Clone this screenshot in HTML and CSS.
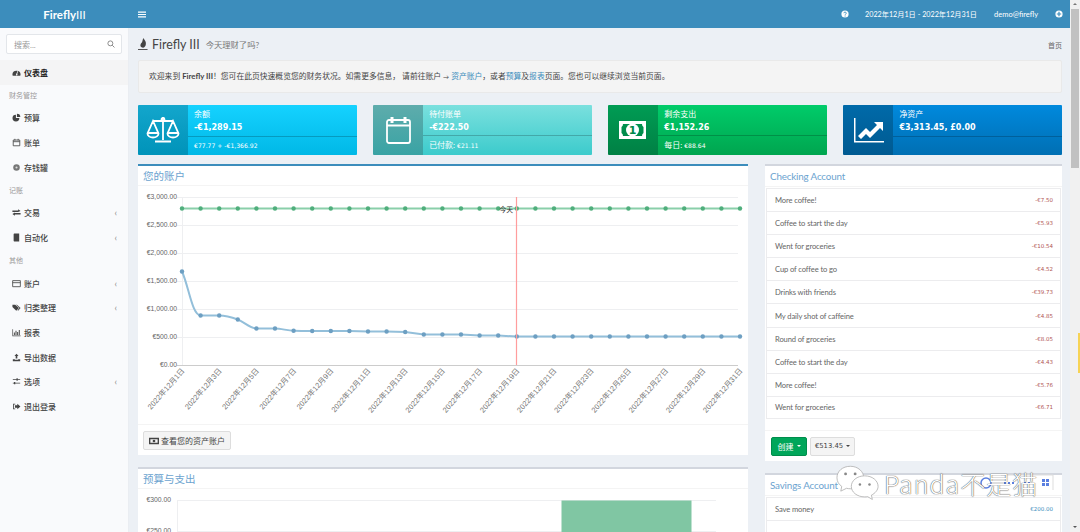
FILE: index.html
```html
<!DOCTYPE html>
<html lang="zh">
<head>
<meta charset="utf-8">
<title>Firefly III</title>
<link rel="stylesheet" href="styles.css">
</head>
<body>
<div class="page">
  <div class="app">
    <header class="topbar">
      <div class="brand"><b>Firefly</b><span>III</span></div>
      <svg class="burger" viewBox="0 0 8 7"><path d="M0 .5h8v1.2H0zM0 2.900h8v1.200H0zM0 5.300h8v1.200H0z"/></svg>
      <div class="topnav">
        <svg class="topic" viewBox="0 0 8 8"><circle cx="4" cy="4" r="3.600" fill="#fff"/><path d="M2.800 3.200c0-1.500 2.500-1.500 2.500 0 0 .9-1.200.8-1.200 1.600" fill="none" stroke="#3c8dbc" stroke-width=".9"/><path d="M3.600 5.400h1v1h-1z" fill="#3c8dbc"/></svg>
        <span class="range">2022年12月1日 - 2022年12月31日</span>
        <span class="user">demo@firefly</span>
        <svg class="topic" viewBox="0 0 8 8"><circle cx="4" cy="4" r="3.600" fill="#fff"/><path d="M3.400 1.800h1.200v1.600h1.600v1.200H4.600v1.600H3.400V4.600H1.800V3.400h1.600z" fill="#3c8dbc"/></svg>
      </div>
    </header>
    <div class="body">
      <aside class="sidebar">
        <div class="search"><span>搜索...</span>
          <svg class="searchic" viewBox="0 0 10 10"><circle cx="4.200" cy="4.200" r="3.100"/><path d="M6.500 6.500 9.300 9.300"/></svg>
        </div>
        <nav class="menu">
          <a class="item active"><svg class="ic" viewBox="0 0 11 11"><path fill-rule="evenodd" d="M.5 8.500a5 5 0 1 1 10 0c0 .6-.3.9-.8.9H1.300c-.5 0-.8-.3-.8-.9zM5 7.500a1 1 0 1 0 1.400-.2L7.500 4 6.800 3.800 5.500 6.700A1 1 0 0 0 5 7.500z"/></svg><b>仪表盘</b></a>
          <div class="label">财务管控</div>
          <a class="item"><svg class="ic" viewBox="0 0 11 11"><path d="M4.800 2a4.200 4.200 0 1 0 4.200 4.200H4.800z"/><path d="M6 .8a4.200 4.200 0 0 1 4.200 4.200H6z"/></svg><b>预算</b></a>
          <a class="item"><svg class="ic line" viewBox="0 0 11 11"><path d="M1.500 2.500h8v7h-8zM1.500 4.500h8M3.500 1v2M7.500 1v2"/></svg><b>账单</b></a>
          <a class="item"><svg class="ic" viewBox="0 0 11 11"><circle cx="5.500" cy="5.500" r="4" fill="#777"/><circle cx="5.500" cy="5.500" r="1.300" fill="#ddd"/></svg><b>存钱罐</b></a>
          <div class="label">记账</div>
          <a class="item more"><svg class="ic" viewBox="0 0 11 11"><path d="M.5 3h7V1.500L10.500 3.700 7.500 5H.5zM10.500 6h-7V5.500L.5 7.300 3.500 9.500V8h7z"/></svg><b>交易</b><i>‹</i></a>
          <a class="item more"><svg class="ic" viewBox="0 0 11 11"><path d="M2 1.500c0-.5.400-.8.800-.8h6v9.600h-6c-.4 0-.8-.3-.8-.8z"/></svg><b>自动化</b><i>‹</i></a>
          <div class="label">其他</div>
          <a class="item more"><svg class="ic line" viewBox="0 0 11 11"><path d="M.8 2h9.400v7.400H.8zM.8 4.500h9.400" stroke-width="1"/></svg><b>账户</b><i>‹</i></a>
          <a class="item more"><svg class="ic" viewBox="0 0 11 11"><path d="M.5 2h3.500l4.500 4.200L5.200 9.500.5 5z"/><path d="M5 2h1l4.500 4.200-3 3.300-.7-.6 2.300-2.700z"/></svg><b>归类整理</b><i>‹</i></a>
          <a class="item"><svg class="ic" viewBox="0 0 11 11"><path d="M.5 1.500h.8v7.700h9.200v.8H.5zM2.300 5.500h1.200v3H2.300zM4.300 3.500h1.200v5H4.300zM6.300 5h1.200v3.500H6.300zM8.300 2.500h1.200v6H8.300z"/></svg><b>报表</b></a>
          <a class="item"><svg class="ic" viewBox="0 0 11 11"><path d="M5.500 1 8 3.800H6.500v3h-2v-3H3zM1 7.500h2.500v.8h4v-.8H10v2.500H1z"/></svg><b>导出数据</b></a>
          <a class="item more"><svg class="ic" viewBox="0 0 11 11"><path d="M1 2.500h4.500V1.500h1.500v1h3v1H7v1H5.500v-1H1zM1 7h1.500V6H4v1h6v1H4v1H2.500V8H1z"/></svg><b>选项</b><i>‹</i></a>
          <a class="item"><svg class="ic" viewBox="0 0 11 11"><path d="M4 2H1.300v7H4v-1H2.300V3H4z"/><path d="M6.500 2 10.300 5.500 6.500 9V7H3.600V4h2.900z"/></svg><b>退出登录</b></a>
        </nav>
      </aside>
      <main class="content">
        <div class="heading">
          <svg class="flame" viewBox="0 0 11 14"><path d="M6 .5C7 3 9.500 4.500 8.500 8c-.4 1.500-1.500 2.700-3 3C3 11 2 9 3 7c.5-1 1.700-1.500 1.800-3C5 2.500 5.500 1.500 6 .5z"/><path d="M0 12.500h10.500v1H0z"/></svg>
          <h1>Firefly III</h1><small>今天理财了吗?</small>
          <span class="crumb">首页</span>
        </div>
        <div class="welcome">欢迎来到 <b>Firefly III</b>！您可在此页快速概览您的财务状况。如需更多信息， 请前往账户 <span class="tiny">→</span> <a>资产账户</a>，或者<a>预算</a>及<a>报表</a>页面。您也可以继续浏览当前页面。</div>
        <div class="boxes">
          <div class="box c1">
            <div class="boxic"><svg viewBox="0 0 34 34"><path d="M17 4v23M9 28.500h16M7 8h20" /><circle cx="17" cy="6.500" r="1.500"/><path d="M7 8 1.500 20.500a5.500 4 0 0 0 11 0zM27 8l-5.500 12.500a5.500 4 0 0 0 11 0zM1.500 20h11M21.500 20h11"/></svg></div>
            <div class="boxbody"><div class="boxtop"><span>余额</span><strong>-€1,289.15</strong></div><div class="boxfoot">€77.77 + -€1,366.92</div></div>
          </div>
          <div class="box c2">
            <div class="boxic"><svg viewBox="0 0 34 34"><path d="M8 7h19a2 2 0 0 1 2 2v19a2 2 0 0 1-2 2H8a2 2 0 0 1-2-2V9a2 2 0 0 1 2-2zM6 12.500h23"/><path d="M11 4v6M24 4v6" stroke-width="3"/></svg></div>
            <div class="boxbody"><div class="boxtop"><span>待付账单</span><strong>-€222.50</strong></div><div class="boxfoot"><span class="cjk">已付款:</span> €21.11</div></div>
          </div>
          <div class="box c3">
            <div class="boxic"><svg viewBox="0 0 34 34" class="solid"><path fill-rule="evenodd" d="M3 8h27v18H3zM7 11a3.500 3.500 0 0 1-1.500 3v6a3.500 3.500 0 0 1 1.500 3h19a3.500 3.500 0 0 1 1.500-3v-6a3.500 3.500 0 0 1-1.500-3z"/><circle cx="16.500" cy="17" r="6.500"/><text x="16.500" y="21" text-anchor="middle" class="billnum">1</text></svg></div>
            <div class="boxbody"><div class="boxtop"><span>剩余支出</span><strong>€1,152.26</strong></div><div class="boxfoot"><span class="cjk">每日:</span> €88.64</div></div>
          </div>
          <div class="box c4">
            <div class="boxic"><svg viewBox="0 0 34 34" class="solid"><path d="M3 5h1.500v23H33v1.500H3z"/><path d="M7 23l8-8 4 4 7-7-3-3h9v9l-3-3-10 10-4-4-5 5z"/></svg></div>
            <div class="boxbody"><div class="boxtop"><span>净资产</span><strong>€3,313.45, £0.00</strong></div><div class="boxfoot"></div></div>
          </div>
        </div>
        <div class="columns">
          <div class="col">
            <section class="card primary">
              <h3 class="cardhead">您的账户</h3>
              <svg class="chart" viewBox="138 186 610 238">
                <defs>
                  <marker id="dg" markerWidth="6" markerHeight="6" refX="3" refY="3" markerUnits="userSpaceOnUse"><circle cx="3" cy="3" r="2.200" fill="#4fae7c"/></marker>
                  <marker id="db" markerWidth="6" markerHeight="6" refX="3" refY="3" markerUnits="userSpaceOnUse"><circle cx="3" cy="3" r="2.200" fill="#6d9fc2"/></marker>
                </defs>
                <path class="grid" d="M177 197.500H738M177 225.500H738M177 253.500H738M177 281.500H738M177 309.500H738M177 337.500H738M182.500 197V365"/>
                <path class="axis" d="M177 365.500H738"/>
                <g class="ylabels">
                  <text x="177" y="198.500">€3,000.00</text>
                  <text x="177" y="226.500">€2,500.00</text>
                  <text x="177" y="254.500">€2,000.00</text>
                  <text x="177" y="282.500">€1,500.00</text>
                  <text x="177" y="310.500">€1,000.00</text>
                  <text x="177" y="338.500">€500.00</text>
                  <text x="177" y="366.500">€0.00</text>
                </g>
                <g class="xlabels">
                  <text transform="translate(185 371) rotate(-49)">2022年12月1日</text>
                  <text transform="translate(222.200 371) rotate(-49)">2022年12月3日</text>
                  <text transform="translate(259.400 371) rotate(-49)">2022年12月5日</text>
                  <text transform="translate(296.600 371) rotate(-49)">2022年12月7日</text>
                  <text transform="translate(333.800 371) rotate(-49)">2022年12月9日</text>
                  <text transform="translate(371 371) rotate(-49)">2022年12月11日</text>
                  <text transform="translate(408.200 371) rotate(-49)">2022年12月13日</text>
                  <text transform="translate(445.400 371) rotate(-49)">2022年12月15日</text>
                  <text transform="translate(482.600 371) rotate(-49)">2022年12月17日</text>
                  <text transform="translate(519.800 371) rotate(-49)">2022年12月19日</text>
                  <text transform="translate(557 371) rotate(-49)">2022年12月21日</text>
                  <text transform="translate(594.200 371) rotate(-49)">2022年12月23日</text>
                  <text transform="translate(631.400 371) rotate(-49)">2022年12月25日</text>
                  <text transform="translate(668.600 371) rotate(-49)">2022年12月27日</text>
                  <text transform="translate(705.800 371) rotate(-49)">2022年12月29日</text>
                  <text transform="translate(743 371) rotate(-49)">2022年12月31日</text>
                </g>
                <path class="lg" d="M182 208.500L200.600 208.500 219.200 208.500 237.800 208.500 256.400 208.500 275 208.500 293.600 208.500 312.200 208.500 330.800 208.500 349.400 208.500 368 208.500 386.600 208.500 405.200 208.500 423.800 208.500 442.400 208.500 461 208.500 479.600 208.500 498.200 208.500 516.800 208.500 535.400 208.500 554 208.500 572.600 208.500 591.200 208.500 609.800 208.500 628.400 208.500 647 208.500 665.600 208.500 684.200 208.500 702.800 208.500 721.400 208.500 740 208.500"/>
                <path class="lb" d="M182 271.500C189 287 192 315 200.600 315.500C206 315.500 214 315.500 219.200 315.500C226 315.500 231 317 237.800 319.500C245 322.500 249 328 256.400 328.500C262 328.500 269 328.500 275 328.500C281 328.500 287 330.500 293.600 330.800C300 331 306 331 312.200 331L330.800 331 349.400 331 368 331.500 386.600 331.500 405.200 332 423.800 334.500 442.400 334.500 461 334.500 479.600 335.500 498.200 335.500 516.800 336.500 535.400 336.500 554 336.500 572.600 336.500 591.200 336.500 609.800 336.500 628.400 336.500 647 336.500 665.600 336.500 684.200 336.500 702.800 336.500 721.400 336.500 740 336.500"/>
                <path class="redline" d="M516.500 197V365"/>
                <text class="today" x="513" y="212">今天</text>
              </svg>
              <div class="cardfoot"><button class="btn"><svg class="btnic" viewBox="0 0 11 8"><path fill-rule="evenodd" d="M0 .5h11v7H0zM1.500 2v4h8V2z"/><circle cx="5.500" cy="4" r="1.500"/></svg>查看您的资产账户</button></div>
            </section>
            <section class="card plain budget">
              <h3 class="cardhead">预算与支出</h3>
              <svg class="chart2" viewBox="138 489 610 80">
                <path class="grid" d="M177 500.500H716M177 531.500H716M177.500 500V572"/>
                <rect x="561.500" y="500.500" width="130" height="72" fill="#80c6a3"/>
                <g class="ylabels">
                  <text x="171" y="502">€300.00</text>
                  <text x="171" y="533">€250.00</text>
                </g>
              </svg>
            </section>
          </div>
          <div class="col">
            <section class="card plain">
              <h3 class="cardhead latin">Checking Account</h3>
              <ul class="list">
                <li><span>More coffee!</span><em>-€7.50</em></li>
                <li><span>Coffee to start the day</span><em>-€5.93</em></li>
                <li><span>Went for groceries</span><em>-€10.54</em></li>
                <li><span>Cup of coffee to go</span><em>-€4.52</em></li>
                <li><span>Drinks with friends</span><em>-€39.73</em></li>
                <li><span>My daily shot of caffeine</span><em>-€4.85</em></li>
                <li><span>Round of groceries</span><em>-€8.05</em></li>
                <li><span>Coffee to start the day</span><em>-€4.43</em></li>
                <li><span>More coffee!</span><em>-€5.76</em></li>
                <li><span>Went for groceries</span><em>-€6.71</em></li>
              </ul>
              <div class="acctfoot"><button class="btn green">创建 <u></u></button><button class="btn amount">€513.45 <u></u></button></div>
            </section>
            <section class="card plain savings">
              <h3 class="cardhead latin">Savings Account</h3>
              <ul class="list">
                <li><span>Save money</span><em class="pos">€200.00</em></li>
                <li></li>
              </ul>
            </section>
          </div>
        </div>
      </main>
    </div>
  </div>
  <div class="scrollbar">
    <div class="arrow up"></div>
    <div class="thumb"></div>
    <div class="arrow down"></div>
  </div>
  <div class="yellowtab"></div>
  <div class="watermark">
    <svg class="wechat" viewBox="0 0 46 38">
      <path class="bub" d="M15 1C7 1 1 6 1 13c0 4 2 7 5 9l-1 5 6-3c1 .3 3 .5 4 .5 8 0 14-5 14-11.500S23 1 15 1z"/>
      <circle cx="10" cy="9" r="1.500" fill="#888"/><circle cx="20" cy="9" r="1.500" fill="#888"/>
      <path class="bub" d="M30 11c-8 0-14 5-14 11s6 11 14 11c1 0 2 0 3-.3l5 3-1-4.500c4-2 7-5.500 7-9.200 0-6-6-11-14-11z"/>
      <circle cx="25" cy="20" r="1.300" fill="#888"/><circle cx="35" cy="20" r="1.300" fill="#888"/>
    </svg>
    <span class="wmtext">Panda不是猫</span>
    <svg class="wmicons" viewBox="0 0 90 24">
      <circle cx="10" cy="12" r="5" fill="none" stroke="#5a7fe0" stroke-width="1.500"/>
      <path d="M28 12h10M48 12h6" stroke="#5a7fe0" stroke-width="2" stroke-dasharray="2 2"/>
      <path d="M66 8h3v3h-3zM70 8h3v3h-3zM66 12h3v3h-3zM70 12h3v3h-3z" fill="#5a7fe0"/>
      <path d="M25 4h52v15" fill="none" stroke="#ddd"/>
    </svg>
  </div>
</div>
</body>
</html>
```

FILE: styles.css
```css
* { box-sizing: border-box; }
html, body { margin: 0; height: 100%; overflow: hidden; }
body { font-family: Lato, "Noto Sans CJK SC", sans-serif; font-size: 8px; color: #444; }
h1, h3, ul { margin: 0; padding: 0; font-weight: 400; }
.page { position: relative; display: flex; width: 1080px; height: 532px; overflow: hidden; }
.app { flex: 1; min-width: 0; display: flex; flex-direction: column; }

.topbar { height: 28px; flex: none; background: #3c8dbc; color: #fff; display: flex; align-items: center; }
.brand { width: 129px; text-align: center; font-size: 11.500px; }
.brand span { font-weight: 400; }
.burger { width: 8px; height: 7px; margin-left: 9px; fill: #fff; }
.topnav { margin-left: auto; display: flex; align-items: center; padding-right: 7px; font-size: 7.500px; }
.topic { width: 8px; height: 8px; }
.range { margin-left: 16px; font-size: 7.200px; }
.user { margin-left: 17px; margin-right: 17px; }

.body { flex: 1; min-height: 0; display: flex; }
.sidebar { width: 129px; flex: none; background: #f9fafc; border-right: 1px solid #eaedf2; padding-top: 6px; }
.search { margin: 0 6px 0 6px; height: 20px; background: #fff; border: 1px solid #e3e6ea; border-radius: 2px; display: flex; align-items: center; justify-content: space-between; padding: 0 6px 0 7px; color: #999; font-size: 8px; }
.searchic { width: 8px; height: 8px; fill: none; stroke: #888; stroke-width: 1.200; }
.menu { margin-top: 6px; }
.item { height: 24.700px; display: flex; align-items: center; padding-left: 12px; color: #444; }
.item b { font-weight: 500; margin-left: 2px; }
.item.active { background: #f4f4f5; color: #222; }
.item.active b { font-weight: 700; }
.ic { width: 9px; height: 9px; fill: #444; margin-right: 1px; flex: none; }
.ic.line { fill: none; stroke: #444; stroke-width: 1; }
.item i { margin-left: auto; margin-right: 11px; font-style: normal; color: #888; font-size: 9px; }
.label { height: 20.900px; padding-left: 9px; color: #999; font-size: 7px; line-height: 21.500px; }

.content { flex: 1; min-width: 0; background: #ecf0f5; padding: 8px 8px 0 9px; overflow: hidden; }
.heading { display: flex; align-items: center; height: 16px; }
.flame { width: 10px; height: 14px; fill: #444; }
h1 { font-size: 12.400px; color: #444; margin-left: 4px; }
.heading small { font-size: 8.300px; color: #777; margin-left: 6px; }
.crumb { margin-left: auto; padding-top: 1px; font-size: 7px; color: #666; }
.welcome { margin-top: 8px; height: 33px; line-height: 31px; background: #f4f4f4; border: 1px solid #e9e9e9; border-radius: 2px; padding-left: 10px; font-size: 7.800px; }
.welcome a { color: #3c8dbc; }
.tiny { font-size: 6px; }

.boxes { margin-top: 12px; display: grid; grid-template-columns: repeat(4, 1fr); column-gap: 16.500px; }
.box { height: 50px; display: flex; color: #fff; border-radius: 1px; overflow: hidden; }
.boxic { width: 50px; flex: none; display: flex; align-items: center; justify-content: center; }
.boxic svg { width: 34px; height: 34px; fill: none; stroke: #fff; stroke-width: 1.800; }
.boxic svg.solid { fill: #fff; stroke: none; }
.billnum { font-family: "DejaVu Sans", sans-serif; font-size: 11px; font-weight: 700; stroke: none; }
.c3 .boxic circle { fill: #fff; }
.c3 .boxic .billnum { fill: #00894a; }
.boxbody { flex: 1; min-width: 0; display: flex; flex-direction: column; padding-left: 6px; }
.boxtop { height: 31.500px; display: flex; flex-direction: column; padding-top: 3px; border-bottom: 1px solid rgba(0,0,0,.2); margin-left: -6px; padding-left: 6px; }
.boxtop span { font-size: 8px; line-height: 12px; }
.boxtop strong { font-family: "DejaVu Sans", sans-serif; font-size: 8px; line-height: 15px; font-weight: 700; }
.boxfoot { font-family: "DejaVu Sans", "Noto Sans CJK SC", sans-serif; font-size: 6.100px; line-height: 18.500px; }
.boxfoot .cjk { font-family: Lato, "Noto Sans CJK SC", sans-serif; font-size: 8px; }
.c1 .boxbody { background: linear-gradient(#15d2ff, #00b8e6); }
.c1 .boxic { background: linear-gradient(#13a6cc, #0093b9); }
.c2 .boxbody { background: linear-gradient(#7ae0de, #3ccbcc); }
.c2 .boxic { background: linear-gradient(#5eacac, #39a3a4); }
.c3 .boxbody { background: linear-gradient(#00cc6a, #00a54f); }
.c3 .boxic { background: linear-gradient(#009c54, #008044); }
.c4 .boxbody { background: linear-gradient(#0089dd, #006fb3); }
.c4 .boxic { background: linear-gradient(#006aa9, #005a91); }

.columns { margin-top: 9px; display: grid; grid-template-columns: 610px 297px; column-gap: 17px; align-items: start; }
.col { min-width: 0; }
.card { background: #fff; border-top: 2px solid #d2d6de; margin-bottom: 12px; }
.card.primary { border-top-color: #3c8dbc; }
.cardhead { height: 20px; line-height: 20px; padding-left: 5px; font-size: 10.500px; color: #6ba3cf; border-bottom: 1px solid #f4f4f4; }
.cardhead.latin { height: 21px; line-height: 20px; font-size: 9.800px; letter-spacing: -.15px; }
.chart { display: block; width: 610px; height: 238px; }
.chart2 { display: block; width: 610px; height: 80px; }
.grid { fill: none; stroke: #eeeff1; stroke-width: 1; }
.axis { fill: none; stroke: #ccc; stroke-width: 1; }
.ylabels text { font-family: "Liberation Sans", sans-serif; font-size: 6.800px; fill: #666; text-anchor: end; }
.xlabels text { font-family: "Liberation Sans", "Noto Sans CJK SC", sans-serif; font-size: 7.500px; fill: #777; text-anchor: end; }
.lg { fill: none; stroke: #8acfaa; stroke-width: 2; marker-start: url(#dg); marker-mid: url(#dg); marker-end: url(#dg); }
.lb { fill: none; stroke: #93bfda; stroke-width: 2; marker-start: url(#db); marker-mid: url(#db); marker-end: url(#db); }
.redline { fill: none; stroke: #ff9d9d; stroke-width: 1.200; }
.today { font-size: 6.800px; fill: #333; text-anchor: end; }
.cardfoot { height: 31px; border-top: 1px solid #f4f4f4; padding: 6px 5px 0; }
.btn { font: inherit; font-size: 8px; height: 19px; padding: 0 5px; background: #f4f4f4; border: 1px solid #ddd; border-radius: 2px; color: #444; display: inline-flex; align-items: center; gap: 2px; }
.btnic { width: 10px; height: 8px; fill: #444; }
.btn u { display: inline-block; border: 2px solid transparent; border-top-color: currentColor; border-bottom: 0; margin-left: 1px; }
.btn.green { background: #00a65a; border-color: #008d4c; color: #fff; width: 36px; justify-content: center; }
.btn.amount { font-family: "DejaVu Sans", sans-serif; font-size: 6.800px; margin-left: 3px; width: 45px; justify-content: center; }
.budget { height: 80px; }

.list { list-style: none; padding: 1px 1px 0; background: #fff; }
.list li { height: 23.100px; display: flex; align-items: center; justify-content: space-between; padding: 0 7px 0 8px; background: #fff; border: 1px solid #ececee; border-bottom-width: 0; font-size: 7.600px; letter-spacing: -.12px; color: #666; }
.list li:last-child { border-bottom-width: 1px; }
.list em { font-style: normal; font-family: "DejaVu Sans", sans-serif; font-size: 5.500px; letter-spacing: 0; color: #b05553; }
.list em.pos { color: #3c8dbc; }
.acctfoot { margin-top: 11px; border-top: 1px solid #f4f4f4; padding: 6px 6px 5px; display: flex; height: 31px; }
.savings { margin-bottom: 0; }

.scrollbar { width: 10px; flex: none; background: #f1f1f1; display: flex; flex-direction: column; position: relative; padding-left: 1px; }
.arrow { height: 9px; flex: none; position: relative; }
.arrow::after { content: ""; position: absolute; left: 2px; top: 3px; border: 2.500px solid transparent; }
.arrow.up::after { border-bottom-color: #777; border-top: 0; }
.arrow.down::after { border-top-color: #555; border-bottom: 0; }
.thumb { height: 159px; flex: none; background: #c1c1c1; margin-right: 1px; }
.arrow.down { margin-top: auto; }

.yellowtab { position: absolute; left: 1078px; top: 333px; width: 2px; height: 40px; background: #f7d354; }
.watermark { position: absolute; left: 836px; top: 463px; display: flex; align-items: center; width: 230px; height: 40px; }
.wechat { width: 44px; height: 37px; flex: none; }
.bub { fill: #fff; stroke: #aaa; stroke-width: .8; }
.wmtext { margin-left: 4px; font-family: "Noto Sans CJK SC", sans-serif; font-weight: 300; font-size: 25px; letter-spacing: 1px; color: #fff; white-space: nowrap; text-shadow: 0 0 1px #555, 0 0 1px #555; position: relative; z-index: 1; }
.wmicons { position: absolute; left: 140px; top: 8px; width: 90px; height: 24px; }
```
